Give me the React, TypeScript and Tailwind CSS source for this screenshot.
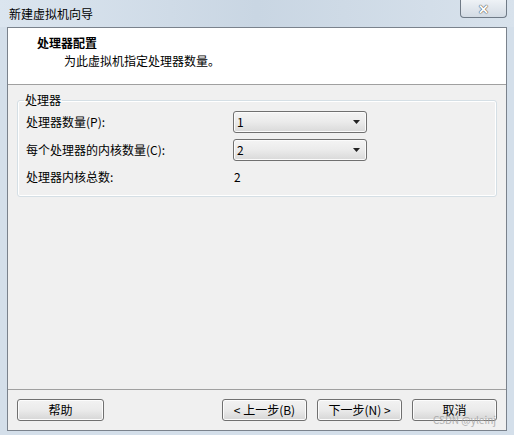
import React from 'react'

const cjk = "font-['Microsoft_YaHei','Noto_Sans_CJK_SC',sans-serif]"

function ComboBox({ value }: { value: string }) {
  return (
    <div className="flex h-[22px] w-[134px] items-center justify-between rounded-[3px] border border-[#707070] bg-gradient-to-b from-[#f4f4f4] via-[#ebebeb] to-[#d9d9d9] pl-[3px] pr-[6px] shadow-[inset_0_0_0_1px_#fbfbfb]">
      <span className="text-[12px] leading-none text-black">{value}</span>
      <svg width="7" height="4" viewBox="0 0 7 4">
        <path d="M0 0h7L3.5 4z" fill="#222" />
      </svg>
    </div>
  )
}

function WizardButton({ label, className = '' }: { label: string; className?: string }) {
  return (
    <button
      type="button"
      className={`flex h-[22px] w-[85px] items-center justify-center rounded-[3px] border border-[#707070] bg-gradient-to-b from-[#f2f2f2] via-[#ebebeb] to-[#d6d6d6] text-[12px] leading-none text-black shadow-[inset_0_0_0_1px_#fcfcfc] ${className}`}
    >
      {label}
    </button>
  )
}

export default function App() {
  return (
    <div className={`relative flex h-[435px] w-[514px] flex-col overflow-hidden bg-[#d4dfea] ${cjk}`}>
      {/* title bar */}
      <div className="relative flex h-[27px] items-center bg-gradient-to-r from-[#dbe5ef] via-[#c9d6e3] to-[#d8e2ec] pl-[9px]">
        <span className="text-[12px] leading-none text-black">新建虚拟机向导</span>
        <div className="absolute right-[7px] top-0 flex h-[18px] w-[47px] items-center justify-center rounded-b-[4px] border border-t-0 border-[#6f7a86] bg-gradient-to-b from-[#eef2f6] to-[#d3dbe4]">
          <span className="text-[13px] font-bold leading-none text-white [text-shadow:0_0_1px_#333,0_0_1px_#333]">✕</span>
        </div>
      </div>

      {/* dialog body */}
      <div className="mx-[7px] flex flex-1 flex-col border border-[#7a828c] bg-[#f0f0f0]">
        <div className="h-[57px] border-b border-[#a0a0a0] bg-white pl-[29px] pt-[7px]">
          <p className="text-[12px] font-bold leading-[16px] text-black">处理器配置</p>
          <p className="mt-[2px] pl-[27px] text-[12px] leading-[16px] text-black">为此虚拟机指定处理器数量。</p>
        </div>

        <div className="flex-1 px-[9px] pt-[7px]">
          <fieldset className="rounded-[3px] border border-[#d5dfe5] pb-[8px] pl-[8px] shadow-[inset_0_0_0_1px_#fff]">
            <legend className="ml-[-2px] px-[1px] text-[12px] leading-[16px] text-black">处理器</legend>
            <div className="mt-[3px] flex h-[22px] items-center">
              <span className="w-[207px] text-[12px] text-black">处理器数量(P):</span>
              <ComboBox value="1" />
            </div>
            <div className="mt-[6px] flex h-[22px] items-center">
              <span className="w-[207px] text-[12px] text-black">每个处理器的内核数量(C):</span>
              <ComboBox value="2" />
            </div>
            <div className="mt-[5px] flex h-[22px] items-center">
              <span className="w-[208px] text-[12px] text-black">处理器内核总数:</span>
              <span className="text-[12px] text-black">2</span>
            </div>
          </fieldset>
        </div>

        <div className="relative flex h-[41px] items-center border-t border-[#a0a0a0] px-[9px]">
          <WizardButton label="帮助" className="w-[87px]" />
          <div className="ml-auto flex gap-[10px]">
            <WizardButton label="< 上一步(B)" />
            <WizardButton label="下一步(N) >" />
            <WizardButton label="取消" />
          </div>
          <span className="absolute bottom-[5px] right-[10px] text-[10px] leading-none text-[#a0a0a0] opacity-80">CSDN @yleinj</span>
        </div>
      </div>
      <div className="h-[4px]" />
    </div>
  )
}
